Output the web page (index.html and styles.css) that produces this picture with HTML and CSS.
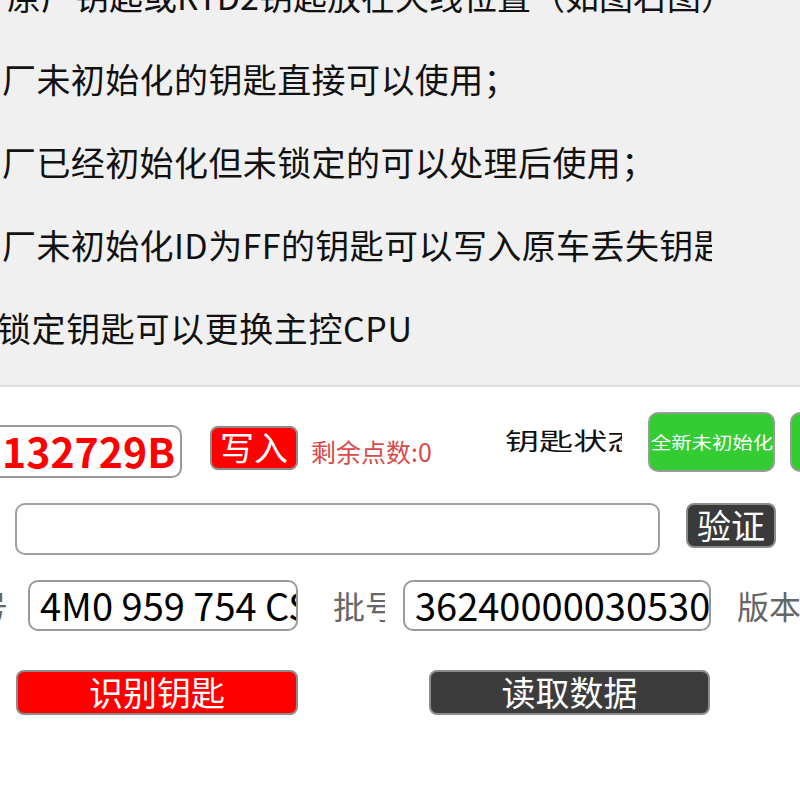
FILE: index.html
```html
<!DOCTYPE html>
<html lang="zh-CN">
<head>
<meta charset="utf-8">
<title>钥匙</title>
<link rel="stylesheet" href="styles.css">
</head>
<body>
<div class="panel">
  <div class="lines">
    <p class="line l1">原厂钥匙或RYD2钥匙放在天线位置（如图右图）</p>
    <p class="line l2">厂未初始化的钥匙直接可以使用；</p>
    <p class="line l2">厂已经初始化但未锁定的可以处理后使用；</p>
    <p class="line l2">厂未初始化ID为FF的钥匙可以写入原车丢失钥匙</p>
    <p class="line l5">锁定钥匙可以更换主控CPU</p>
  </div>
</div>
<div class="controls">
  <div class="row r1">
    <div class="code">132729B</div>
    <div class="btn write">写入</div>
    <div class="points">剩余点数:0</div>
    <div class="status"><span class="stretch">钥匙状态</span></div>
    <div class="green"><span class="gtext">全新未初始化</span></div>
    <div class="green green2"><span class="gtext">已初始化</span></div>
  </div>
  <div class="row r2">
    <div class="wide"></div>
    <div class="btn verify">验证</div>
  </div>
  <div class="row r3">
    <div class="cut-left"><span>件号</span></div>
    <div class="field f1">4M0 959 754 CS</div>
    <div class="lab lab2">批号</div>
    <div class="field f2">362400000305301</div>
    <div class="lab lab3">版本</div>
  </div>
  <div class="row r4">
    <div class="btn big red">识别钥匙</div>
    <div class="btn big dark">读取数据</div>
  </div>
</div>
</body>
</html>
```
FILE: styles.css
```css
html, body {
  margin: 0;
  padding: 0;
}
body {
  width: 800px;
  height: 800px;
  overflow: hidden;
  background: #ffffff;
  font-family: "Noto Sans CJK SC", "Microsoft YaHei", sans-serif;
}
.panel {
  height: 385px;
  background: #f0f0f0;
  border-bottom: 2px solid #dedede;
  overflow: hidden;
}
.lines {
  width: 712px;
  overflow: hidden;
  white-space: nowrap;
  font-size: 34px;
  line-height: 83px;
  color: #111111;
  margin-top: -46px;
}
.line {
  margin: 0;
}
.l1 { padding-left: 7px; }
.l2 { padding-left: 2px; letter-spacing: 0.4px; }
.l5 { margin-left: -3px; letter-spacing: 0.6px; }

.controls {
  display: flex;
  flex-direction: column;
}
.row {
  display: flex;
  align-items: flex-start;
  flex-shrink: 0;
  white-space: nowrap;
}
.r1 { margin-top: 25px; height: 91px; }
.r2 { height: 77px; }
.r3 { height: 90px; }
.r4 { height: 60px; }

.row > div { flex-shrink: 0; box-sizing: border-box; }

.code {
  margin: 13px 0 0 -20px;
  width: 202px;
  height: 53px;
  border: 2px solid #9a9a9a;
  border-radius: 10px;
  padding-left: 20px;
  color: #ff0000;
  font-weight: 700;
  font-size: 41px;
  line-height: 47px;
  overflow: hidden;
  background: #fff;
}
.btn {
  color: #ffffff;
  text-align: center;
  border: 2px solid #8c8c8c;
  border-radius: 8px;
  overflow: hidden;
}
.write {
  margin: 14px 0 0 28px;
  width: 88px;
  height: 44px;
  background: #ff0000;
  font-size: 34px;
  line-height: 38px;
}
.points {
  margin: 22px 0 0 13px;
  width: 125px;
  color: #d94a4a;
  font-size: 25px;
  line-height: 34px;
}
.status {
  margin: 13px 0 0 69px;
  width: 117px;
  overflow: hidden;
  font-size: 24px;
  line-height: 30px;
  color: #111;
}
.stretch {
  display: inline-block;
  transform: scaleX(1.42);
  transform-origin: left center;
}
.green {
  margin-left: 26px;
  width: 127px;
  height: 60px;
  background: #33cc33;
  border: 2px solid #9a9a9a;
  border-radius: 10px;
  color: #ffffff;
  font-size: 17px;
  line-height: 56px;
  text-align: center;
  display: flex;
  justify-content: center;
  overflow: hidden;
}
.green2 { margin-left: 15px; }
.gtext {
  display: inline-block;
  transform: scaleX(1.2);
  transform-origin: center center;
}
.wide {
  margin-left: 15px;
  width: 645px;
  height: 52px;
  border: 2px solid #a0a0a0;
  border-radius: 10px;
  background: #fff;
}
.verify {
  margin-left: 26px;
  width: 90px;
  height: 45px;
  background: #3a3a3a;
  font-size: 34px;
  line-height: 39px;
}
.cut-left {
  display: flex;
  justify-content: flex-end;
  width: 8px;
  overflow: hidden;
  color: #666;
  font-size: 32px;
  line-height: 51px;
}
.cut-left span { flex-shrink: 0; }
.field {
  height: 51px;
  border: 2px solid #9a9a9a;
  border-radius: 10px;
  padding-left: 10px;
  font-size: 38px;
  line-height: 45px;
  color: #000;
  overflow: hidden;
  background: #fff;
}
.f1 { margin-left: 20px; width: 270px; }
.f2 { margin-left: 18px; width: 308px; }
.lab {
  color: #666;
  font-size: 32px;
  line-height: 51px;
  overflow: hidden;
}
.lab2 { margin-left: 35px; width: 52px; }
.lab3 { margin-left: 26px; width: 80px; }
.big {
  height: 45px;
  font-size: 34px;
  line-height: 40px;
}
.red { margin-left: 16px; width: 282px; background: #ff0000; }
.dark { margin-left: 131px; width: 281px; background: #3c3c3c; }
```
